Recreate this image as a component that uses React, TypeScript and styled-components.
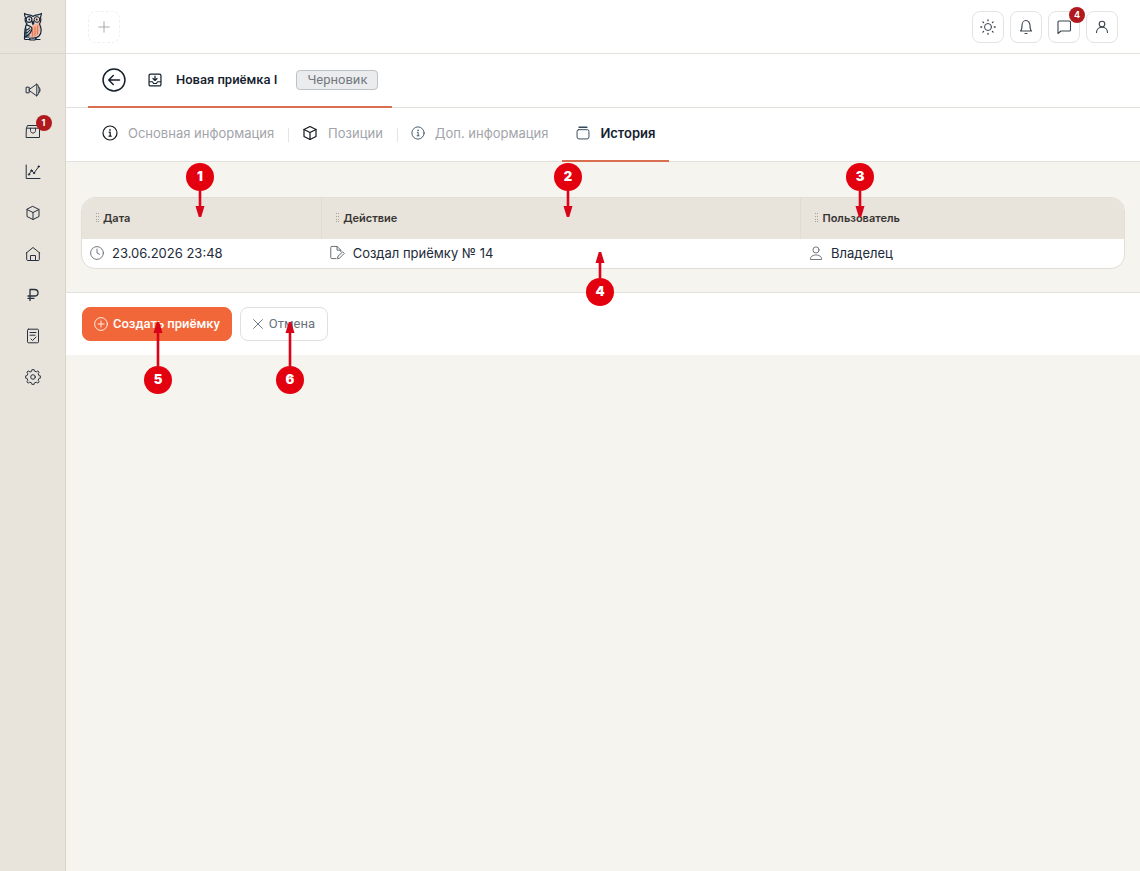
import React from "react";
import styled, { createGlobalStyle } from "styled-components";

const GlobalStyle = createGlobalStyle`
  *, *::before, *::after { box-sizing: border-box; }
  body {
    margin: 0;
    background: #f6f4ef;
    color: #14202e;
    font-family: Inter, "Liberation Sans", sans-serif;
    font-size: 13px;
    line-height: 20px;
  }
  button { font: inherit; cursor: pointer; }
  a { color: inherit; text-decoration: none; }
`;

const Page = styled.div`
  position: relative;
  display: flex;
  min-height: 100vh;
`;

const Sidebar = styled.aside`
  flex: none;
  width: 66px;
  background: #e8e3db;
  border-right: 1px solid #d9d5cb;
`;

const LogoLink = styled.a`
  display: flex;
  align-items: center;
  justify-content: center;
  height: 54px;
  border-bottom: 1px solid #d8d4ca;
`;

const SideNav = styled.nav`
  display: flex;
  flex-direction: column;
  align-items: center;
  gap: 9px;
  padding-top: 20px;
`;

const SideLink = styled.a`
  position: relative;
  display: flex;
  align-items: center;
  justify-content: center;
  width: 32px;
  height: 32px;
`;

const CountBadge = styled.span<{ $inset?: boolean }>`
  position: absolute;
  top: ${(p) => (p.$inset ? 0 : -5)}px;
  right: ${(p) => (p.$inset ? -3 : -6)}px;
  width: 16px;
  height: 16px;
  border-radius: 50%;
  background: #b01a1e;
  color: #fff;
  font-size: 9px;
  font-weight: 700;
  line-height: 16px;
  text-align: center;
`;

const Main = styled.main`
  flex: 1;
  min-width: 0;
`;

const Bar = styled.header`
  display: flex;
  align-items: center;
  justify-content: space-between;
  height: 54px;
  padding: 0 22px;
  background: #fff;
  border-bottom: 1px solid #e2e2dd;
`;

const IconButton = styled.button<{ $dashed?: boolean }>`
  position: relative;
  display: flex;
  align-items: center;
  justify-content: center;
  width: 32px;
  height: 32px;
  padding: 0;
  background: #fff;
  border: 1px ${(p) => (p.$dashed ? "dashed #f0f0ee" : "solid #e3e3df")};
  border-radius: 8px;
  color: ${(p) => (p.$dashed ? "#9b9fa3" : "#3a444f")};
`;

const ButtonGroup = styled.div`
  display: flex;
  gap: 6px;
`;

const TabBar = styled.div`
  display: flex;
  height: 54px;
  padding-left: 22px;
  background: #fff;
  border-bottom: 1px solid #e2e2dd;
`;

const PageTab = styled.div`
  display: flex;
  align-items: center;
  gap: 14px;
  height: 54px;
  padding: 0 14px;
  border-bottom: 2px solid #d96f50;
`;

const BackButton = styled.button`
  display: flex;
  margin-right: 8px;
  padding: 0;
  border: 0;
  background: none;
  color: #14202e;
`;

const PageTitle = styled.h1`
  margin: 0 5px 0 0;
  font-family: Roboto, Inter, sans-serif;
  font-size: 13px;
  font-weight: 500;
  line-height: 20px;
  white-space: nowrap;
`;

const StatusChip = styled.span`
  height: 20px;
  padding: 0 10px;
  border: 1px solid #bfc2c4;
  border-radius: 4px;
  background: #ebeced;
  color: #737980;
  font-family: Roboto, Inter, sans-serif;
  line-height: 18px;
`;

const SectionTab = styled.a<{ $active?: boolean }>`
  position: relative;
  display: flex;
  align-items: center;
  gap: 10px;
  height: 54px;
  padding: 0 14px 2px;
  border-bottom: 2px solid ${(p) => (p.$active ? "#d96f50" : "transparent")};
  color: ${(p) => (p.$active ? "#14202e" : "#a2a4aa")};
  font-weight: ${(p) => (p.$active ? 600 : 400)};
  white-space: nowrap;

  & + &::before {
    content: "";
    position: absolute;
    top: 20px;
    left: 0;
    height: 14px;
    border-left: 1px solid #e4e4e2;
  }
`;

const Content = styled.section`
  padding: 35px 15px 23px;
`;

const TableFrame = styled.div`
  overflow: hidden;
  border: 1px solid #e3ded5;
  border-radius: 14px;
  background: #fff;
`;

const Table = styled.table`
  width: 100%;
  table-layout: fixed;
  border-collapse: collapse;
`;

const HeadCell = styled.th<{ $width: string }>`
  width: ${(p) => p.$width};
  height: 41px;
  padding: 0 14px 2px;
  background: #e8e3db;
  font-size: 11px;
  font-weight: 600;
  line-height: 16px;
  color: #383633;
  text-align: left;

  & + & {
    border-left: 1px solid #e1dcd3;
  }
`;

const Cell = styled.td`
  height: 29px;
  padding: 0 8px 2px;
  color: #1d2a3a;
`;

const Inline = styled.span<{ $gap: number }>`
  display: flex;
  align-items: center;
  gap: ${(p) => p.$gap}px;
`;

const ActionBar = styled.footer`
  display: flex;
  gap: 8px;
  padding: 14px 16px;
  background: #fff;
  border-top: 1px solid #e2e2dd;
`;

const ActionButton = styled.button<{ $primary?: boolean }>`
  display: flex;
  align-items: center;
  gap: ${(p) => (p.$primary ? 5 : 6)}px;
  height: 34px;
  padding: 0 ${(p) => (p.$primary ? 11 : 12)}px;
  border: 1px solid ${(p) => (p.$primary ? "#f26739" : "#dfe0e0")};
  border-radius: 8px;
  background: ${(p) => (p.$primary ? "#f26739" : "#fff")};
  color: ${(p) => (p.$primary ? "#fff" : "#6b727b")};
  font-family: Roboto, Inter, sans-serif;
  font-weight: ${(p) => (p.$primary ? 500 : 400)};
`;

const Pin = styled.div<{ $x: number; $y: number; $up?: boolean }>`
  position: absolute;
  left: ${(p) => p.$x}px;
  top: ${(p) => p.$y}px;
  display: flex;
  flex-direction: ${(p) => (p.$up ? "column-reverse" : "column")};
  align-items: center;
  width: 28px;
  pointer-events: none;
`;

const PinNumber = styled.span`
  width: 28px;
  height: 28px;
  border-radius: 50%;
  background: #e3000f;
  color: #fff;
  font-size: 13px;
  font-weight: 900;
  line-height: 27px;
  text-align: center;
`;

type IconProps = { size?: number; stroke?: number; color?: string; children: React.ReactNode };

const Drawing = styled.svg`
  flex: none;
`;

const Icon = ({ size = 16, stroke = 1, color = "currentColor", children }: IconProps) => (
  <Drawing
    width={size}
    height={size}
    viewBox="0 0 16 16"
    fill="none"
    stroke={color}
    strokeWidth={stroke}
    strokeLinecap="round"
    strokeLinejoin="round"
    aria-hidden="true"
  >
    {children}
  </Drawing>
);

const Owl = () => (
  <svg width="20" height="30" viewBox="0 0 20 30" fill="none" strokeLinecap="round" strokeLinejoin="round" aria-hidden="true">
    <path d="M10 13c4-1 6-3 6.500-4 1.500 5 1 11-1.500 14-2 2-5 3-8 2 0-4 0-9 3-12z" fill="#f3b39b" />
    <path d="M2 12v14h4l1-3-3 1c1-3 0-7-2-12z" fill="#5d7182" />
    <g stroke="#15263a" strokeWidth="1.200">
      <path d="M1.500 1.500c2 1.500 4 1 7 2l1.500 1 1.500-1c3-1 5-.5 7-2-.2 1.700-.6 2.700-1 3.700" />
      <path d="M1.500 1.500c0 2 .4 3 1 4-1 3 0 5 1.500 6.500C2 14 1.500 17 1.500 27" />
      <path d="M17.500 5.500c.8 3 0 5-1 6.500 2 4 2 9-.5 12-2 2-5 2.500-8 2" />
      <path d="M10 9l-.8 2 .8 1.500 1-1.500z" fill="#15263a" />
      <path d="M4 13c3 1 5 1.500 5 4-1 4-3 6-7 8M2.500 18c2 0 3-.5 4-2M2.500 21c2 0 3-1 4.500-3" />
      <path d="M2 27.500h4l1-1.500v2h5l1-2v1.500h4" />
    </g>
    <circle cx="6" cy="7.500" r="2.900" fill="#e8e3db" stroke="#15263a" strokeWidth="1.200" />
    <circle cx="14" cy="7.500" r="2.900" fill="#f3cbb9" stroke="#15263a" strokeWidth="1" />
    <circle cx="6.300" cy="7.500" r=".9" fill="#15263a" />
    <circle cx="13.700" cy="7.500" r=".9" fill="#15263a" />
    <path d="M9.500 18v6M12 15v9M14.500 14v8" stroke="#dd7655" strokeWidth="1.100" />
  </svg>
);

const InfoShapes = () => (
  <>
    <circle cx="8" cy="8" r="7" />
    <path d="M7.200 7.200h1V11M7 11.200h2.200" />
    <circle cx="8" cy="4.900" r=".3" fill="currentColor" />
  </>
);

const CubeShapes = () => (
  <>
    <path d="M8 1.500l6 3v7l-6 3-6-3v-7z" />
    <path d="M2 4.500l6 3 6-3M8 7.500v7" />
  </>
);

const sideItems: { label: string; count?: number; drawing: React.ReactNode }[] = [
  {
    label: "Объявления",
    drawing: (
      <>
        <path d="M1.500 5.200h2.700v5.600H1.500zM4.200 7.500L11.800 2v12L4.200 8.500M11.800 2c3.200 2 3.200 10 0 12M14.200 5.500c1.200 1.500 1.200 3.500 0 5" />
      </>
    ),
  },
  {
    label: "Заказы",
    count: 1,
    drawing: <path d="M1.500 5.200l1-2.700h11l1 2.700v9.300h-13zM1.500 5.200h13M5.500 5.200v2.300c0 3.400 5 3.400 5 0V5.200" />,
  },
  {
    label: "Аналитика",
    drawing: (
      <>
        <path d="M1.200 1v13.500H15M4 10.500l2.500-4L9 9l4.800-6.500" />
        <g fill="currentColor"><circle cx="4" cy="10.500" r=".7" /><circle cx="6.500" cy="6.500" r=".7" /><circle cx="9" cy="9" r=".7" /><circle cx="13.800" cy="2.500" r=".7" /></g>
      </>
    ),
  },
  { label: "Товары", drawing: <CubeShapes /> },
  {
    label: "Склад",
    drawing: <path d="M1.200 7L8 1.500 14.800 7M1.700 6.700v6.800q0 1 1 1h10.600q1 0 1-1V6.700M5.500 14.500v-5h5v5" />,
  },
  { label: "Финансы", drawing: <path d="M5 13.500V2.500h4.500c4.700 0 4.700 6.500 0 6.500H3M3 11.300h6" strokeWidth="1.300" /> },
  {
    label: "Документы",
    drawing: <path d="M3.500 1.200h9q1 0 1 1v11.600q0 1-1 1h-9q-1 0-1-1V2.200q0-1 1-1zM5 4.500h6M5 7.200h5M6 11l1.500 1.500L11 9" />,
  },
  {
    label: "Настройки",
    drawing: (
      <>
        <path d="M6.700 2l.4-1.700h1.800L9.300 2l2 .8 1.500-.9 1.300 1.300-.9 1.500.8 2 1.700.4v1.800l-1.700.4-.8 2 .9 1.500-1.300 1.300-1.500-.9-2 .8-.4 1.700H7.100L6.700 14l-2-.8-1.500.9-1.300-1.300.9-1.500-.8-2-1.700-.4V7.100L2 6.700l.8-2-.9-1.500 1.300-1.300 1.500.9z" />
        <circle cx="8" cy="8" r="2.300" />
      </>
    ),
  },
];

const columns = [
  { title: "Дата", width: "23%" },
  { title: "Действие", width: "46%" },
  { title: "Пользователь", width: "31%" },
];

const pins = [
  { n: 1, x: 186, y: 163, length: 26 },
  { n: 2, x: 554, y: 163, length: 26 },
  { n: 3, x: 846, y: 163, length: 26 },
  { n: 4, x: 586, y: 252, length: 26, up: true },
  { n: 5, x: 144, y: 322, length: 44, up: true },
  { n: 6, x: 276, y: 322, length: 44, up: true },
];

const Arrow = ({ length, up }: { length: number; up?: boolean }) => (
  <svg width="10" height={length} viewBox={`0 0 10 ${length}`} fill="#d9041a" aria-hidden="true">
    <g transform={up ? `rotate(180 5 ${length / 2})` : undefined}>
      <rect x="3.700" y="0" width="2.600" height={length - 8} />
      <path d={`M.5 ${length - 11}h9L6.200 ${length}H3.800z`} />
    </g>
  </svg>
);

const Grip = () => (
  <svg width="4" height="9" viewBox="0 0 4 9" fill="#a5a29d" aria-hidden="true">
    <path d="M0 0h1v1H0zM2 0h1v1H2zM0 3h1v1H0zM2 3h1v1H2zM0 6h1v1H0zM2 6h1v1H2zM0 8h1v1H0zM2 8h1v1H2z" />
  </svg>
);

export default function App() {
  return (
    <>
      <GlobalStyle />
      <Page>
        <Sidebar>
          <LogoLink href="#" aria-label="Главная"><Owl /></LogoLink>
          <SideNav>
            {sideItems.map((item) => (
              <SideLink key={item.label} href="#" aria-label={item.label}>
                <Icon color="#26303f">{item.drawing}</Icon>
                {item.count && <CountBadge $inset>{item.count}</CountBadge>}
              </SideLink>
            ))}
          </SideNav>
        </Sidebar>

        <Main>
          <Bar>
            <IconButton $dashed aria-label="Новая вкладка">
              <Icon size={14}><path d="M8 2v12M2 8h12" /></Icon>
            </IconButton>
            <ButtonGroup>
              <IconButton aria-label="Тема">
                <Icon>
                  <circle cx="8" cy="8" r="3.500" />
                  <path d="M8 .8v.9M8 14.300v.9M.8 8h.9M14.300 8h.9M2.900 2.900l.7.7M12.400 12.400l.7.7M2.900 13.100l.7-.7M12.400 3.600l.7-.7" strokeWidth="1.300" />
                </Icon>
              </IconButton>
              <IconButton aria-label="Уведомления">
                <Icon stroke={1.1}><path d="M2.500 12h11c-1.200-1-1.500-2.500-1.500-5.500 0-2.500-1.600-5-4-5s-4 2.500-4 5C4 9.500 3.700 11 2.500 12zM7 14.500h2" /></Icon>
              </IconButton>
              <IconButton aria-label="Сообщения">
                <Icon stroke={1.1}><path d="M3 2h10.500q1 0 1 1v8q0 1-1 1H5l-3 2.500V3q0-1 1-1z" /></Icon>
                <CountBadge>4</CountBadge>
              </IconButton>
              <IconButton aria-label="Профиль">
                <Icon stroke={1.1}><circle cx="8" cy="5" r="2.800" /><path d="M2.500 13.500c0-7 11-7 11 0" /></Icon>
              </IconButton>
            </ButtonGroup>
          </Bar>

          <TabBar>
            <PageTab>
              <BackButton aria-label="Назад">
                <Icon size={24}><circle cx="8" cy="8" r="7.300" /><path d="M11.700 8H4.500M7.500 5L4.500 8l3 3" /></Icon>
              </BackButton>
              <Icon size={14} stroke={1.4}>
                <path d="M3 1.200h10q1.800 0 1.800 1.800v10q0 1.800-1.800 1.800H3q-1.800 0-1.800-1.800V3q0-1.800 1.800-1.800zM1.200 10H5l1.500 2h3L11 10h3.800M8 3.500v5M5.700 6.300L8 8.500l2.300-2.200" />
              </Icon>
              <PageTitle>Новая приёмка I</PageTitle>
              <StatusChip>Черновик</StatusChip>
            </PageTab>
          </TabBar>

          <TabBar as="nav">
            <SectionTab href="#">
              <Icon color="#14181d" stroke={1.2}><InfoShapes /></Icon>
              Основная информация
            </SectionTab>
            <SectionTab href="#">
              <Icon color="#14181d" stroke={1.2}><CubeShapes /></Icon>
              Позиции
            </SectionTab>
            <SectionTab href="#">
              <Icon size={14} color="#34485a"><InfoShapes /></Icon>
              Доп. информация
            </SectionTab>
            <SectionTab href="#" $active>
              <Icon size={14} color="#34485a" stroke={1.1}>
                <path d="M3.500 1.500h9" strokeWidth="1.600" />
                <path d="M3 4.200h10q1.800 0 1.800 1.800v6.500q0 2.300-2.300 2.300h-9q-2.300 0-2.300-2.300V6q0-1.800 1.800-1.800z" />
              </Icon>
              История
            </SectionTab>
          </TabBar>

          <Content>
            <TableFrame>
              <Table>
                <thead>
                  <tr>
                    {columns.map((column) => (
                      <HeadCell key={column.title} $width={column.width} scope="col">
                        <Inline $gap={3}><Grip />{column.title}</Inline>
                      </HeadCell>
                    ))}
                  </tr>
                </thead>
                <tbody>
                  <tr>
                    <Cell>
                      <Inline $gap={8}>
                        <Icon size={14} color="#5f666e"><circle cx="8" cy="8" r="7.300" /><path d="M8 3.500V8l3 1.500" /></Icon>
                        23.06.2026 23:48
                      </Inline>
                    </Cell>
                    <Cell>
                      <Inline $gap={8}>
                        <Icon size={15} color="#5f666e">
                          <path d="M6.500 14.500H2q-1.200 0-1.200-1.200V2.700Q.8 1.500 2 1.500h5.500l4 4V7M7.500 1.500v4h4M8 14.200l.6-2.400 4.900-4.500 1.700 1.700-4.700 4.700z" />
                        </Icon>
                        Создал приёмку № 14
                      </Inline>
                    </Cell>
                    <Cell>
                      <Inline $gap={8}>
                        <Icon size={14} color="#5f666e"><circle cx="8" cy="4.500" r="3.500" /><path d="M1.500 15c-.5-6.500 13.500-6.500 13 0z" /></Icon>
                        Владелец
                      </Inline>
                    </Cell>
                  </tr>
                </tbody>
              </Table>
            </TableFrame>
          </Content>

          <ActionBar>
            <ActionButton $primary>
              <Icon size={14}><circle cx="8" cy="8" r="7.300" /><path d="M8 4.500v7M4.500 8h7" /></Icon>
              Создать приёмку
            </ActionButton>
            <ActionButton>
              <Icon size={10} stroke={1.5}><path d="M1 1l14 14M15 1L1 15" /></Icon>
              Отмена
            </ActionButton>
          </ActionBar>
        </Main>

        {pins.map((pin) => (
          <Pin key={pin.n} $x={pin.x} $y={pin.y} $up={pin.up}>
            <PinNumber>{pin.n}</PinNumber>
            <Arrow length={pin.length} up={pin.up} />
          </Pin>
        ))}
      </Page>
    </>
  );
}
